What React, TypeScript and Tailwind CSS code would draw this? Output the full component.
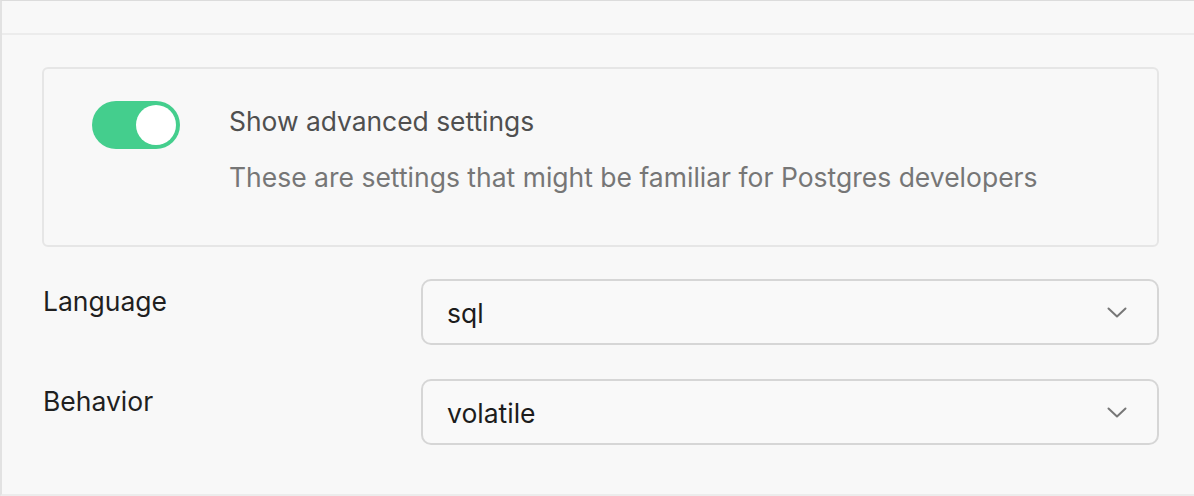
function Chevron() {
  return (
    <svg width="20" height="11" viewBox="0 0 20 11" fill="none" className="shrink-0">
      <path d="M1.5 1.5l8.5 8 8.5-8" stroke="#777777" strokeWidth="2" strokeLinecap="round" strokeLinejoin="round" />
    </svg>
  );
}

function Select({ value }: { value: string }) {
  return (
    <div className="flex-1 h-[66px] flex items-center justify-between rounded-[10px] border-2 border-[#d6d6d6] bg-[#f9f9f9] pl-[24px] pr-[30px]">
      <span className="text-[26.5px] leading-[32px] pt-[2px] text-[#1c1c1c]">{value}</span>
      <Chevron />
    </div>
  );
}

export default function App() {
  return (
    <div className="w-full h-[496px] bg-[#f8f8f8] border-l-2 border-t border-b-2 border-l-[#e2e2e2] border-t-[#dcdcdc] border-b-[#ececec] font-['Inter','Noto_Sans',sans-serif] overflow-hidden">
      {/* header strip */}
      <div className="h-[34px] border-b-2 border-[#ececec]" />

      <div className="pl-[40px] pr-[35px] pt-[32px]">
        {/* advanced settings card */}
        <div className="h-[180px] rounded-[6px] border-2 border-[#e6e6e6] flex items-start pl-[48px] pt-[32px] gap-[49px]">
          <div className="w-[88px] h-[48px] rounded-full bg-[#44ce8d] flex items-center justify-end pr-[4px] shrink-0">
            <div className="w-[40px] h-[40px] rounded-full bg-white" />
          </div>
          <div className="flex flex-col gap-[24px] pt-[4px]">
            <span className="text-[26.4px] leading-[32px] text-[#4f4f4f]">Show advanced settings</span>
            <span className="text-[26.5px] leading-[32px] text-[#767676]">
              These are settings that might be familiar for Postgres developers
            </span>
          </div>
        </div>

        {/* form rows */}
        <div className="flex flex-col gap-[34px] mt-[32px]">
          <div className="flex items-start">
            <label className="w-[379px] pl-[1px] pt-[6px] text-[26.5px] leading-[32px] text-[#1f1f1f]">Language</label>
            <Select value="sql" />
          </div>
          <div className="flex items-start">
            <label className="w-[379px] pl-[1px] pt-[6px] text-[26.5px] leading-[32px] text-[#1f1f1f]">Behavior</label>
            <Select value="volatile" />
          </div>
        </div>
      </div>
    </div>
  );
}
